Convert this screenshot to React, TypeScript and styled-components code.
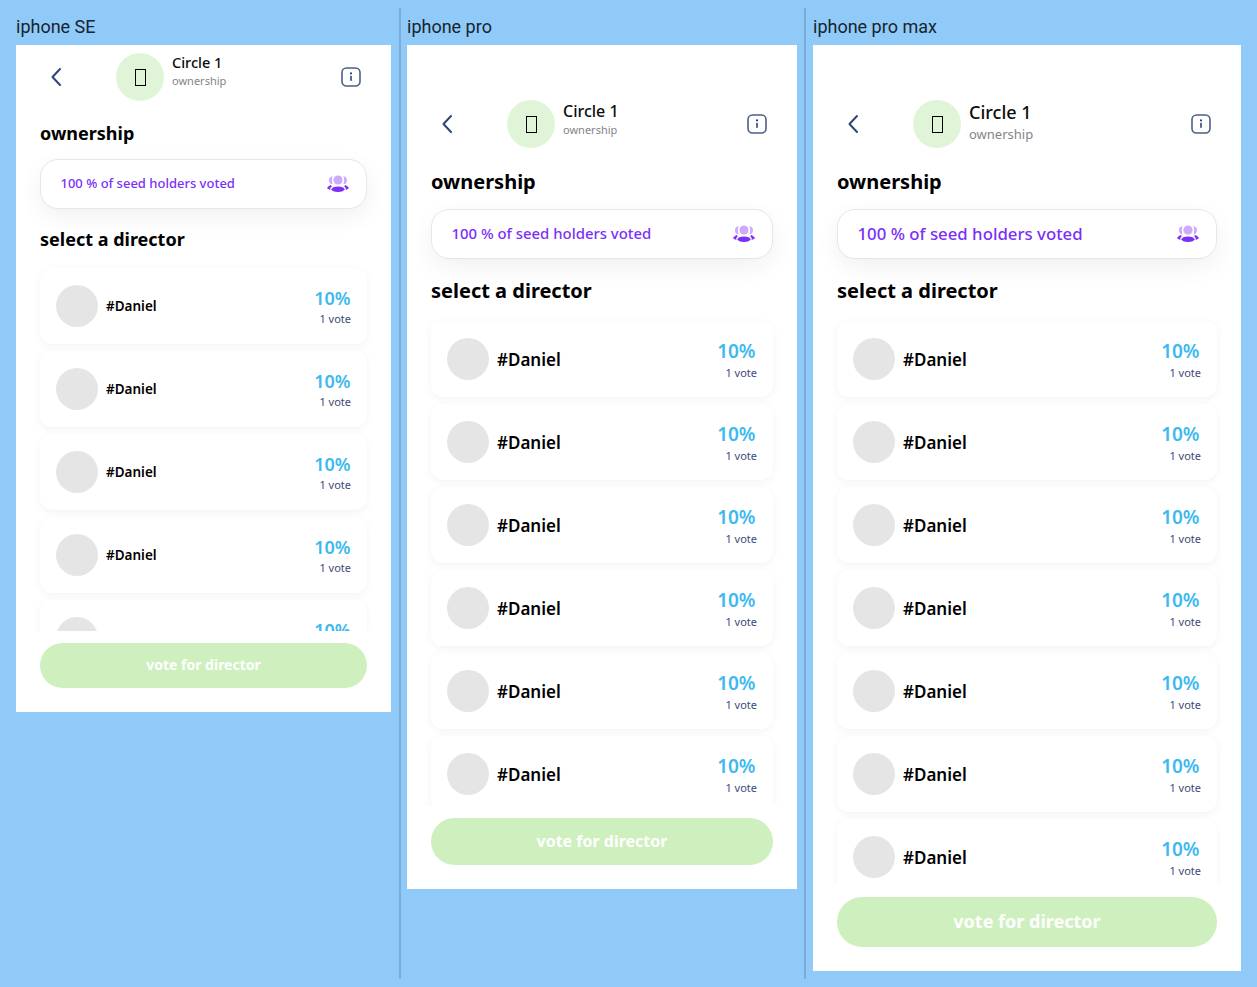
import React from "react";
import styled, { createGlobalStyle } from "styled-components";

const GlobalStyle = createGlobalStyle`
  html, body {
    margin: 0;
    padding: 0;
    background: #90caf9;
  }
  * {
    box-sizing: border-box;
  }
`;

const FONT = `"Noto Sans", "Open Sans", sans-serif`;

const Page = styled.div`
  display: flex;
  align-items: stretch;
  width: 1257px;
  height: 987px;
  padding: 8px 0 8px 16px;
  background: #90caf9;
  overflow: hidden;
`;

const Column = styled.section<{ $left: number; $right: number }>`
  padding-left: ${(p) => p.$left}px;
  padding-right: ${(p) => p.$right}px;
`;

const Divider = styled.div`
  width: 2px;
  background: #7cabd6;
`;

const DeviceLabel = styled.div`
  height: 37px;
  padding-top: 8px;
  font-family: Roboto, sans-serif;
  font-size: 18px;
  line-height: 22px;
  color: #17242e;
`;

const Frame = styled.div<{ $width: number; $height: number }>`
  display: flex;
  flex-direction: column;
  width: ${(p) => p.$width}px;
  height: ${(p) => p.$height}px;
  background: #fff;
  font-family: ${FONT};
`;

const Header = styled.header<{ $top: number }>`
  display: flex;
  align-items: center;
  padding: ${(p) => p.$top}px 30px 0 24px;
`;

const BackSlot = styled.div`
  display: flex;
  width: 76px;
  padding-left: 10px;
`;

const Avatar = styled.div`
  display: flex;
  align-items: center;
  justify-content: center;
  flex: none;
  width: 48px;
  height: 48px;
  border-radius: 50%;
  background: #e0f5d8;
`;

const Tofu = styled.span`
  display: block;
  width: 11px;
  height: 17px;
  border: 1.5px solid #000;
`;

const TitleBlock = styled.div<{ $offset: number }>`
  flex: 1;
  align-self: flex-start;
  margin-left: 8px;
  margin-top: ${(p) => p.$offset}px;
`;

const Title = styled.div<{ $size: number }>`
  font-size: ${(p) => p.$size}px;
  font-weight: 500;
  line-height: 22px;
  color: #0b0b0b;
`;

const Subtitle = styled.div<{ $size: number; $gap: number }>`
  margin-top: ${(p) => p.$gap}px;
  font-size: ${(p) => p.$size}px;
  line-height: 15px;
  color: #84848a;
`;

const Body = styled.div`
  padding: 0 24px;
`;

const SectionTitle = styled.h2<{ $top: number; $size: number }>`
  margin: ${(p) => p.$top}px 0 0;
  font-size: ${(p) => p.$size}px;
  font-weight: 700;
  line-height: 26px;
  color: #000;
`;

const VotedCard = styled.div<{ $top: number }>`
  display: flex;
  align-items: center;
  justify-content: space-between;
  height: 50px;
  margin-top: ${(p) => p.$top}px;
  padding: 0 17px 2px 19.5px;
  background: #fff;
  border: 1px solid #e6e6e8;
  border-radius: 18px;
  box-shadow: 0 8px 24px rgba(0, 0, 0, 0.06);
`;

const VotedText = styled.span<{ $size: number }>`
  font-size: ${(p) => p.$size}px;
  font-weight: 500;
  color: #7b2ff7;
`;

const List = styled.div<{ $top: number }>`
  display: flex;
  flex-direction: column;
  gap: 7px;
  flex: 1;
  min-height: 0;
  margin: 0 16px;
  padding: ${(p) => p.$top}px 8px 0;
  overflow: hidden;
`;

const Row = styled.div`
  display: flex;
  align-items: center;
  flex: none;
  height: 76px;
  padding: 0 16px;
  background: #fff;
  border-radius: 12px;
  box-shadow: 0 2px 8px rgba(0, 0, 0, 0.05);
`;

const Photo = styled.div`
  flex: none;
  width: 42px;
  height: 42px;
  border-radius: 50%;
  background: #e5e5e5;
`;

const Name = styled.div<{ $size: number }>`
  flex: 1;
  margin-left: 8px;
  font-size: ${(p) => p.$size}px;
  font-weight: 600;
  color: #000;
`;

const Score = styled.div`
  text-align: right;
`;

const Percent = styled.div<{ $size: number; $inset: number }>`
  margin-right: ${(p) => p.$inset}px;
  font-size: ${(p) => p.$size}px;
  font-weight: 600;
  line-height: 26px;
  color: #3db9ef;
`;

const Votes = styled.div<{ $gap: number }>`
  margin-top: ${(p) => p.$gap}px;
  font-size: 11px;
  line-height: 16px;
  color: #3d4a7a;
`;

const Footer = styled.div`
  padding: 12px 24px 24px;
`;

const VoteButton = styled.button<{ $height: number; $size: number }>`
  display: block;
  width: 100%;
  height: ${(p) => p.$height}px;
  padding: 0 0 2px;
  border: 0;
  border-radius: ${(p) => p.$height / 2}px;
  background: #ceefbe;
  font-family: ${FONT};
  font-size: ${(p) => p.$size}px;
  font-weight: 700;
  color: #fff;
`;

const BackIcon = () => (
  <svg width="12" height="20" viewBox="0 0 12 20" fill="none">
    <path d="M10 2 L2.5 10 L10 18" stroke="#2f4578" strokeWidth="2" strokeLinecap="round" strokeLinejoin="round" />
  </svg>
);

const InfoIcon = () => (
  <svg width="20" height="20" viewBox="0 0 20 20" fill="none">
    <rect x="1" y="1" width="18" height="18" rx="4.5" stroke="#4a6088" strokeWidth="1.6" />
    <circle cx="10" cy="6.4" r="1.1" fill="#2f4578" />
    <rect x="9.2" y="8.8" width="1.6" height="5.2" rx="0.8" fill="#2f4578" />
  </svg>
);

const GroupIcon = () => (
  <svg width="22" height="18" viewBox="0 0 22 18" fill="none">
    <circle cx="11" cy="6" r="4.6" fill="#cdaafb" />
    <path d="M5 2.2 C1.6 3 0.8 8 4 10 L5.6 10 C4.6 7.6 4.6 4.6 5.6 2.6 Z" fill="#cdaafb" />
    <path d="M17 2.2 C20.4 3 21.2 8 18 10 L16.4 10 C17.4 7.6 17.4 4.6 16.4 2.6 Z" fill="#cdaafb" />
    <ellipse cx="11" cy="15.2" rx="6.5" ry="2.8" fill="#7b2ff7" />
    <path d="M0 14.2 C0.5 12.8 2.5 11.4 4 11 L4.8 12.6 C3.6 13.2 3.2 14.4 3.2 16 Z" fill="#7b2ff7" />
    <path d="M22 14.2 C21.5 12.8 19.5 11.4 18 11 L17.2 12.6 C18.4 13.2 18.8 14.4 18.8 16 Z" fill="#7b2ff7" />
  </svg>
);

interface Device {
  label: string;
  left: number;
  right: number;
  width: number;
  height: number;
  top: number;
  roomy: boolean;
  rows: number;
  titleSize: number;
  titleOffset: number;
  subSize: number;
  subGap: number;
  votedSize: number;
  nameSize: number;
  buttonHeight: number;
  buttonSize: number;
}

const devices: Device[] = [
  { label: "iphone SE", left: 0, right: 8, width: 375, height: 667, top: 8, roomy: false, rows: 5, titleSize: 14.5, titleOffset: -2, subSize: 11, subGap: 0, votedSize: 13, nameSize: 13.5, buttonHeight: 45, buttonSize: 14 },
  { label: "iphone pro", left: 6, right: 7, width: 390, height: 844, top: 55, roomy: true, rows: 6, titleSize: 16, titleOffset: 0, subSize: 11, subGap: 0, votedSize: 14.9, nameSize: 17, buttonHeight: 47, buttonSize: 16 },
  { label: "iphone pro max", left: 7, right: 8, width: 428, height: 926, top: 55, roomy: true, rows: 7, titleSize: 18, titleOffset: 1, subSize: 13, subGap: 4, votedSize: 16.8, nameSize: 17, buttonHeight: 50, buttonSize: 18 },
];

const Phone: React.FC<{ device: Device }> = ({ device }) => {
  const rows = Array.from({ length: device.rows }, (_, i) => i);
  const headingSize = device.roomy ? 20 : 18;
  return (
    <Column $left={device.left} $right={device.right}>
      <DeviceLabel>{device.label}</DeviceLabel>
      <Frame $width={device.width} $height={device.height}>
        <Header $top={device.top}>
          <BackSlot>
            <BackIcon />
          </BackSlot>
          <Avatar>
            <Tofu />
          </Avatar>
          <TitleBlock $offset={device.titleOffset}>
            <Title $size={device.titleSize}>Circle 1</Title>
            <Subtitle $size={device.subSize} $gap={device.subGap}>ownership</Subtitle>
          </TitleBlock>
          <InfoIcon />
        </Header>
        <Body>
          <SectionTitle $top={device.roomy ? 21 : 19} $size={headingSize}>ownership</SectionTitle>
          <VotedCard $top={device.roomy ? 14 : 13}>
            <VotedText $size={device.votedSize}>100 % of seed holders voted</VotedText>
            <GroupIcon />
          </VotedCard>
          <SectionTitle $top={device.roomy ? 19 : 17} $size={headingSize}>select a director</SectionTitle>
        </Body>
        <List $top={device.roomy ? 17 : 16}>
          {rows.map((i) => (
            <Row key={i}>
              <Photo />
              <Name $size={device.nameSize}>#Daniel</Name>
              <Score>
                <Percent $size={device.roomy ? 19 : 18} $inset={device.roomy ? 1.5 : 0.5}>10%</Percent>
                <Votes $gap={device.roomy ? 1 : 0}>1 vote</Votes>
              </Score>
            </Row>
          ))}
        </List>
        <Footer>
          <VoteButton $height={device.buttonHeight} $size={device.buttonSize}>
            vote for director
          </VoteButton>
        </Footer>
      </Frame>
    </Column>
  );
};

export default function App() {
  return (
    <Page>
      <GlobalStyle />
      {devices.map((device, i) => (
        <React.Fragment key={device.label}>
          {i > 0 && <Divider />}
          <Phone device={device} />
        </React.Fragment>
      ))}
    </Page>
  );
}
